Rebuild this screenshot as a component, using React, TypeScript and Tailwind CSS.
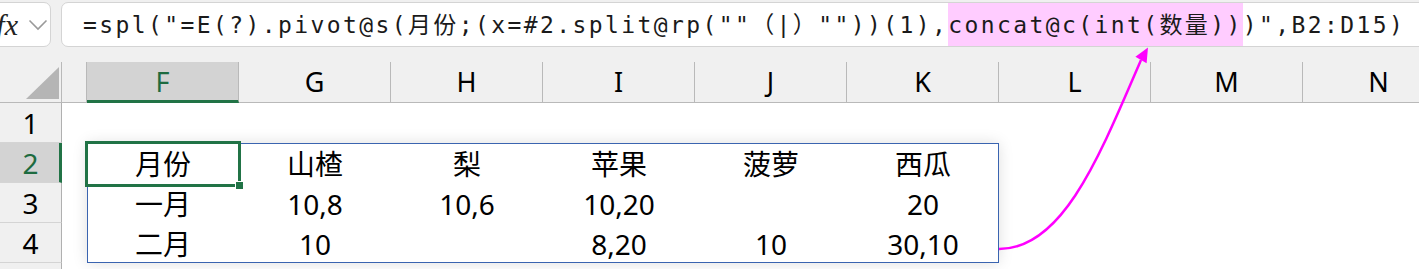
import React from "react";

const cols = ["F", "G", "H", "I", "J", "K", "L", "M", "N"];

const rows: string[][] = [
  ["月份", "山楂", "梨", "苹果", "菠萝", "西瓜"],
  ["一月", "10,8", "10,6", "10,20", "", "20"],
  ["二月", "10", "", "8,20", "10", "30,10"],
];

const sans = "font-['Noto_Sans','Noto_Sans_CJK_SC',sans-serif]";

export default function App() {
  return (
    <div className="relative h-[269px] w-[1419px] overflow-hidden bg-white text-black">
      {/* formula bar */}
      <div className="flex h-[62px] gap-[10px] bg-[#f0f0f0] pt-[2px]">
        <div className="ml-[-20px] flex h-[45px] w-[71px] shrink-0 items-center rounded-[7px] border border-[#d4d4d4] bg-white">
          <span className="w-[37px] text-right font-['Liberation_Serif',serif] text-[30px] italic leading-none text-[#222]">
            fx
          </span>
          <svg className="ml-[10px]" width="20" height="12" viewBox="0 0 20 12">
            <path d="M1.5 1.5 L10 10 L18.5 1.5" fill="none" stroke="#9a9a9a" strokeWidth="1.6" />
          </svg>
        </div>
        <div className="mr-[-30px] flex h-[45px] flex-1 items-stretch rounded-[7px] border border-[#d4d4d4] bg-white pl-[21px] font-['DejaVu_Sans_Mono','Noto_Sans_CJK_SC',monospace] text-[23px] tracking-[2.4px] text-[#1a1a1a]">
          <span className="flex items-center whitespace-pre pt-[2px]">
            {'=spl("=E(?).pivot@s(月份;(x=#2.split@rp(""（|）""))(1),'}
          </span>
          <span className="flex items-center whitespace-pre bg-[#ffccff] pt-[2px]">
            {"concat@c(int(数量))"}
          </span>
          <span className="flex items-center whitespace-pre pt-[2px]">{')",B2:D15)'}</span>
        </div>
      </div>

      {/* column headers */}
      <div className={`flex h-[41px] bg-[#f0f0f0] ${sans} text-[27px]`}>
        <div className="relative h-full w-[62px] shrink-0 border-b border-r border-[#b9b9b9]">
          <svg className="absolute left-0 top-0" width="62" height="41" viewBox="0 0 62 41">
            <polygon points="26,37 59,5 59,37" fill="#b5b5b5" />
          </svg>
        </div>
        <div className="h-full w-[25px] shrink-0 border-b border-r border-[#b9b9b9]" />
        {cols.map((c) =>
          c === "F" ? (
            <div
              key={c}
              className="flex h-full w-[152px] shrink-0 items-center justify-center border-b-[3px] border-r border-b-[#217346] border-r-[#b9b9b9] bg-[#d3d3d3] pt-[2px] text-[#1d6b40]"
            >
              {c}
            </div>
          ) : (
            <div
              key={c}
              className="flex h-full w-[152px] shrink-0 items-center justify-center border-b border-r border-[#b9b9b9]"
            >
              {c}
            </div>
          )
        )}
      </div>

      {/* body */}
      <div className={`flex ${sans}`}>
        <div className="w-[62px] shrink-0 text-[28px]">
          {["1", "2", "3", "4", ""].map((n, i) =>
            n === "2" ? (
              <div
                key={i}
                className="flex h-[40px] items-center justify-center border-b border-r-[3px] border-b-[#d4d4d4] border-r-[#217346] bg-[#d3d3d3] pl-[2px] text-[#1d6b40]"
              >
                {n}
              </div>
            ) : (
              <div
                key={i}
                className="flex h-[40px] items-center justify-center border-b border-r border-b-[#d4d4d4] border-r-[#b0b0b0] bg-[#f0f0f0]"
              >
                {n}
              </div>
            )
          )}
        </div>
        <div className="flex-1 bg-white pl-[25px]">
          <div className="h-[40px]" />
          <div className="w-[912px] shadow-[0_0_14px_rgba(0,0,0,0.13)] outline-1 -outline-offset-1 outline-[#3a64b0]">
            {rows.map((r, ri) => (
              <div key={ri} className="grid h-[40px] grid-cols-6 text-[28px]">
                {r.map((v, ci) => (
                  <div key={ci} className="relative flex items-center justify-center">
                    {v}
                    {ri === 0 && ci === 0 && (
                      <>
                        <div className="absolute -bottom-[2px] -left-[2px] -right-[2px] -top-[2px] border-[3px] border-[#217346]" />
                        <div className="absolute -bottom-[5px] -right-[5px] h-[9px] w-[9px] border border-white bg-[#217346]" />
                      </>
                    )}
                  </div>
                ))}
              </div>
            ))}
          </div>
        </div>
      </div>

      {/* arrow annotation */}
      <svg
        className="pointer-events-none absolute left-0 top-0"
        width="1419"
        height="269"
        viewBox="0 0 1419 269"
      >
        <path d="M999 249 C 1062 249, 1098 160, 1141 60" fill="none" stroke="#ff00ff" strokeWidth="2.5" />
        <polygon points="1148,47.5 1146.6,63.3 1135.4,56.8" fill="#ff00ff" />
      </svg>
    </div>
  );
}
